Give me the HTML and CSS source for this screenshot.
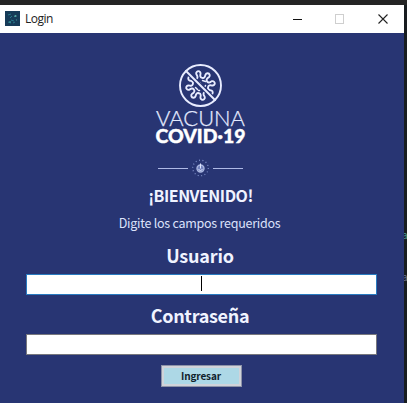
FILE: index.html
```
<!DOCTYPE html>
<html lang="es">
<head>
<meta charset="utf-8">
<title>Login</title>
<link rel="stylesheet" href="styles.css">
</head>
<body>
<div class="window">
  <header class="titlebar">
    <svg class="app-icon" width="15" height="15" viewBox="0 0 15 15">
      <rect width="15" height="15" fill="#163b58"/>
      <path d="M3 4l3-1M5 7l2-2M6 9l3 1M3 11l3 1M9 6l2-2M8 12l2-1" stroke="#28778a" fill="none"/>
      <circle cx="10.5" cy="5" r="1.1" fill="#55a6a0"/><circle cx="5" cy="11" r="1" fill="#348f91"/><circle cx="11.5" cy="9" r=".7" fill="#3a7d89"/>
    </svg>
    <span class="title">Login</span>
    <svg class="controls" width="100" height="12" viewBox="0 0 100 12" fill="none">
      <path d="M4 6.5h9" stroke="#111"/>
      <rect x="46.500" y="1.500" width="8" height="9" stroke="#cfcfcf"/>
      <path d="M89.500 1.500l9 9m0-9l-9 9" stroke="#222" stroke-width="1.100"/>
    </svg>
  </header>
  <main class="content">
    <svg class="logo" width="92" height="84" viewBox="0 0 92 84">
      <g fill="none" stroke="#e8ecff" stroke-linecap="round" stroke-linejoin="round">
        <circle cx="45.500" cy="23.500" r="20.500" stroke-width="1.900"/>
        <g transform="translate(45.500 23.500)">
          <path id="virus" stroke-width="1.900" d=""/>
          <path stroke-width="1.500" d="M2-5l3 1M5 0l-.5 1M-5 2l2 2M-2 5h1M-1-3l1 1"/>
          <path stroke="#283573" stroke-width="4.500" stroke-linecap="butt" d="M-13-13L13 13"/>
          <path stroke-width="1.900" d="M-14.500-14.500L14.500 14.500"/>
        </g>
      </g>
      <text class="logo-light" x="1" y="64" textLength="89" lengthAdjust="spacingAndGlyphs">VACUNA</text>
      <text class="logo-heavy" x=".5" y="81" textLength="90" lengthAdjust="spacingAndGlyphs">COVID·19</text>
    </svg>
    <svg class="divider" width="86" height="18" viewBox="0 0 86 18" fill="none">
      <path d="M1 9.500h30M56 9.500h30" stroke="#aeb9e5"/>
      <circle cx="43.500" cy="9" r="7.800" stroke="#7f8fc9" stroke-width="1.200" stroke-dasharray="1 2.500"/>
      <circle cx="43.500" cy="9.500" r="3.500" fill="#7382bd" stroke="#aab6df" stroke-width="1.400"/>
      <path d="M43.500 4.500v5M41.500 10.500q2 2 4 0" stroke="#dce4ff"/>
    </svg>
    <h1 class="welcome">¡BIENVENIDO!</h1>
    <p class="hint">Digite los campos requeridos</p>
    <label class="label" for="user">Usuario</label>
    <div class="field focused" id="user"><span class="caret"></span></div>
    <label class="label second" for="pass">Contraseña</label>
    <div class="field" id="pass"></div>
    <button class="submit">Ingresar</button>
  </main>
</div>
<aside class="behind"><span class="glyph upper">a</span><span class="glyph lower">a</span></aside>
<script src="virus.js"></script>
</body>
</html>
```
FILE: virus.js
```
// Closed outline with eight rounded knobs around the body.
const points = [];
const knob = [[-22.5, 7.8], [-12, 8], [-8, 10], [-10, 11.2], [-10.500, 13.4], [0, 15], [10.500, 13.4], [10, 11.2], [8, 10], [12, 8]];
for (let i = 0; i < 8; i++) {
  for (const [offset, radius] of knob) {
    const a = (i * 45 + offset - 10) * Math.PI / 180;
    points.push([radius * Math.cos(a), radius * Math.sin(a)]);
  }
}
const mid = (p, q) => ((p[0] + q[0]) / 2).toFixed(2) + " " + ((p[1] + q[1]) / 2).toFixed(2);
let d = "M" + mid(points[points.length - 1], points[0]);
points.forEach((p, i) => {
  d += "Q" + p[0].toFixed(2) + " " + p[1].toFixed(2) + " " + mid(p, points[(i + 1) % points.length]);
});
document.getElementById("virus").setAttribute("d", d + "Z");
```
FILE: styles.css
```
* { box-sizing: border-box; }
body {
  margin: 0;
  width: 407px;
  height: 403px;
  padding-top: 5px;
  display: flex;
  overflow: hidden;
  background: #242424;
  font-family: "Noto Sans CJK SC", "Noto Sans", sans-serif;
}
.window { width: 404px; height: 398px; background: #283573; }
.titlebar {
  height: 28px;
  padding: 0 15px 0 5px;
  display: flex;
  align-items: center;
  background: #fff;
}
.app-icon { margin-top: -2px; }
.title {
  margin-left: 5px;
  font: 12px/28px "Open Sans", sans-serif;
  letter-spacing: -0.5px;
  color: #222;
}
.controls { margin-left: auto; margin-top: -1px; }
.content {
  display: flex;
  flex-direction: column;
  align-items: center;
  padding: 29px 27px 0 26px;
  color: #f0f3ff;
}
.logo { flex: none; margin-left: -1px; }
.logo-light { font: 300 21px Lato, sans-serif; fill: #e4eaff; stroke: #e4eaff; stroke-width: .25px; }
.logo-heavy { font: 900 19px Lato, sans-serif; fill: #fff; stroke: #fff; stroke-width: .4px; }
.divider { flex: none; margin: 13px 3px 0 0; }
.welcome { margin: 7px 2px 0 0; font-size: 16px; line-height: 22px; font-weight: 700; letter-spacing: -.5px; }
.hint { margin: 8px 4px 0 0; font-size: 12.5px; line-height: 18px; letter-spacing: -.25px; color: #dce2fb; }
.label { margin: 11px 3px 0 0; font-size: 18px; line-height: 24px; font-weight: 700; letter-spacing: -.2px; }
.field {
  width: 351px;
  height: 21px;
  margin-top: 7px;
  display: flex;
  justify-content: center;
  align-items: center;
  background: #fff;
  border: 1px solid #77777d;
}
.focused { border-color: #297bc0; }
.caret { width: 1px; height: 15px; margin-top: -2px; background: #000; }
.second { margin-top: 8px; letter-spacing: -.3px; }
.submit {
  width: 81px;
  height: 22px;
  margin: 10px 1px 0 0;
  padding: 0;
  border: 3px solid #d0d3d9;
  outline: 1px solid #8c93a8;
  outline-offset: -1px;
  background: #add8e6;
  color: #10222c;
  font: 700 10px/16px "Noto Sans CJK SC", sans-serif;
  letter-spacing: -.15px;
}
.behind { width: 3px; height: 398px; overflow: hidden; background: #181d20; display: flex; flex-direction: column; }
.glyph { font-size: 10px; line-height: 12px; color: #4b9993; margin-left: -2px; }
.upper { margin-top: 224px; }
.lower { margin-top: 30px; color: #68718c; }
```
